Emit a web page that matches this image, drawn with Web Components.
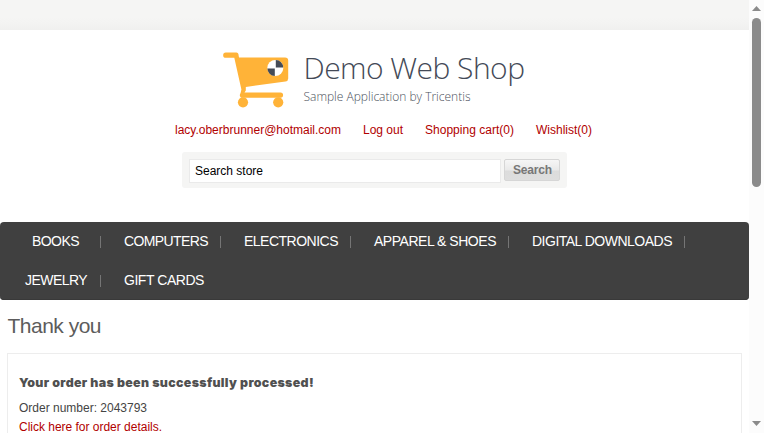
<!DOCTYPE html>
<html lang="en"><head><meta charset="utf-8"><title>Demo Web Shop</title>
<style>
html,body{margin:0;height:100%;overflow:hidden;background:#fff}
body{font:12px/14px "Liberation Sans",Arial,sans-serif;color:#444}
</style></head><body>
<shop-page></shop-page>
<script>
// Text run whose letter-spacing is derived from a requested width in pixels.
customElements.define('fit-text', class extends HTMLElement{
  connectedCallback(){
    if(this.shadowRoot) return;
    this.attachShadow({mode:'open'}).innerHTML='<style>:host{display:block;white-space:nowrap;flex:none}span{display:inline-block}</style><span><slot></slot></span>';
    const w=+this.getAttribute('w'), s=this.shadowRoot.querySelector('span');
    this.style.width=w+'px';
    s.style.letterSpacing=((w-s.getBoundingClientRect().width)/this.textContent.length)+'px';
  }
});
function define(name,html){
  const t=document.createElement('template'); t.innerHTML=html;
  customElements.define(name,class extends HTMLElement{
    connectedCallback(){ if(!this.shadowRoot) this.attachShadow({mode:'open'}).append(document.importNode(t.content,true)); }
  });
}
define('shop-logo',`<style>
:host{display:flex;height:60px;padding-left:223px;margin-top:20px}
svg{flex:none;width:66px;height:60px}
.t{padding-left:14.5px}
.a{font:300 30px/36px "Open Sans",sans-serif;color:#444a57}
.b{font:300 12px/16px "Open Sans",sans-serif;color:#4b505b;margin-top:3px}
</style>
<svg viewBox="0 0 66 60"><g fill="#ffb338">
<path d="M2.8 2.5H13.5Q15 2.5 15.4 4L16 7.4H62Q65.2 7.4 65.2 10.5V28.5Q65.2 31 62.5 31.5L22.8 37V40.5L21.5 42.5H57.5A2.6 2.6 0 0 1 57.5 47.7H18.5Q15.6 46.5 17.6 43L18.4 39.5L11.3 7.8H2.8A2.6 2.6 0 0 1 2.8 2.5Z"/>
<circle cx="20" cy="52.3" r="5.1"/><circle cx="55.2" cy="52.3" r="5.1"/></g>
<circle cx="52.3" cy="18" r="8" fill="#fff"/><path fill="#454b56" d="M52.8 17.5V10A7.5 7.5 0 0 1 60.2 17.5ZM51.8 18.5V26A7.5 7.5 0 0 1 44.4 18.5Z"/></svg>
<div class="t"><fit-text class="a" w="221">Demo Web Shop</fit-text><fit-text class="b" w="167">Sample Application by Tricentis</fit-text></div>`);
define('account-links',`<style>:host{display:flex;gap:22px;padding-left:175px;margin-top:13px;color:#b10000;height:14px}</style>
<fit-text w="166">lacy.oberbrunner@hotmail.com</fit-text><fit-text w="40">Log out</fit-text><fit-text w="89">Shopping cart(0)</fit-text><fit-text w="56">Wishlist(0)</fit-text>`);
define('search-box',`<style>
:host{display:flex;box-sizing:border-box;width:385px;height:36px;margin:15px 0 0 182px;padding:7px;gap:3px;background:#f5f5f4;border-radius:3px}
.i{box-sizing:border-box;width:312px;height:24px;border:1px solid #eaeaea;background:#fff;color:#000;padding:4px 5px}
.s{box-sizing:border-box;width:56px;height:22px;border:1px solid #d6d6d6;border-radius:2px;background:linear-gradient(#f6f6f6,#e9e9e9 50%,#dcdcdc 55%,#dedede);font-weight:bold;color:#777;padding:3px 8px}
</style><div class="i"><fit-text w="68">Search store</fit-text></div><div class="s"><fit-text w="39">Search</fit-text></div>`);
define('nav-item',`<style>:host{display:flex;height:39px;box-sizing:border-box;padding:11px 13px 0 24px;position:relative;font-size:14px;line-height:16px;color:#fff}
:host::after{content:"";position:absolute;right:0;top:14px;width:1px;height:12px;background:#757575}
:host(.last)::after{display:none}:host(.b){padding-left:32px;padding-right:22px}:host(.j){padding-left:25px;padding-right:14px}</style><slot></slot>`);
define('nav-bar',`<style>:host{display:flex;flex-wrap:wrap;align-content:flex-start;height:78px;margin-top:34px;background:#404040;border-radius:4px;box-shadow:inset 0 -1px #393939}
.g{padding-left:23px}</style>
<nav-item class="b"><fit-text w="47">BOOKS</fit-text></nav-item><nav-item class="g"><fit-text w="84">COMPUTERS</fit-text></nav-item><nav-item class="g"><fit-text w="94">ELECTRONICS</fit-text></nav-item><nav-item class="g"><fit-text w="122">APPAREL &amp; SHOES</fit-text></nav-item><nav-item class="g"><fit-text w="140">DIGITAL DOWNLOADS</fit-text></nav-item><nav-item class="j"><fit-text w="62">JEWELRY</fit-text></nav-item><nav-item class="g last"><fit-text w="80">GIFT CARDS</fit-text></nav-item>`);
define('order-panel',`<style>
:host{display:block;padding:14px 7px 0 7px}
.h{font-size:21px;line-height:24px;color:#5c5c5c;margin-left:.5px}
.p{box-sizing:border-box;border:1px solid #ededed;margin-top:15px;height:180px;padding:22px 11px}
.o{font:900 12.4px/14px Inter,"Liberation Sans",sans-serif;color:#505050;margin-bottom:11px}
.l{color:#b10000;margin-top:5px}
</style><fit-text class="h" w="93.5">Thank you</fit-text><div class="p"><fit-text class="o" w="295">Your order has been successfully processed!</fit-text><fit-text w="128">Order number: 2043793</fit-text><fit-text class="l" w="143">Click here for order details.</fit-text></div>`);
define('scroll-bar',`<style>:host{display:block;width:15px;height:433px;background:#fcfcfc}svg{display:block}</style>
<svg width="15" height="433" fill="#8b8b8b"><path d="M3 11L7.5 6L12 11Z"/><rect x="3" y="18" width="9" height="169" rx="4.5"/><path d="M3 421H12L7.5 426Z"/></svg>`);
define('shop-page',`<style>:host{display:flex;height:433px;overflow:hidden}main{width:749px;flex:none}.top{height:30px;background:linear-gradient(#f5f5f4 60%,#f0f0ef)}</style>
<main><div class="top"></div><shop-logo></shop-logo><account-links></account-links><search-box></search-box><nav-bar></nav-bar><order-panel></order-panel></main><scroll-bar></scroll-bar>`);
</script></body></html>
